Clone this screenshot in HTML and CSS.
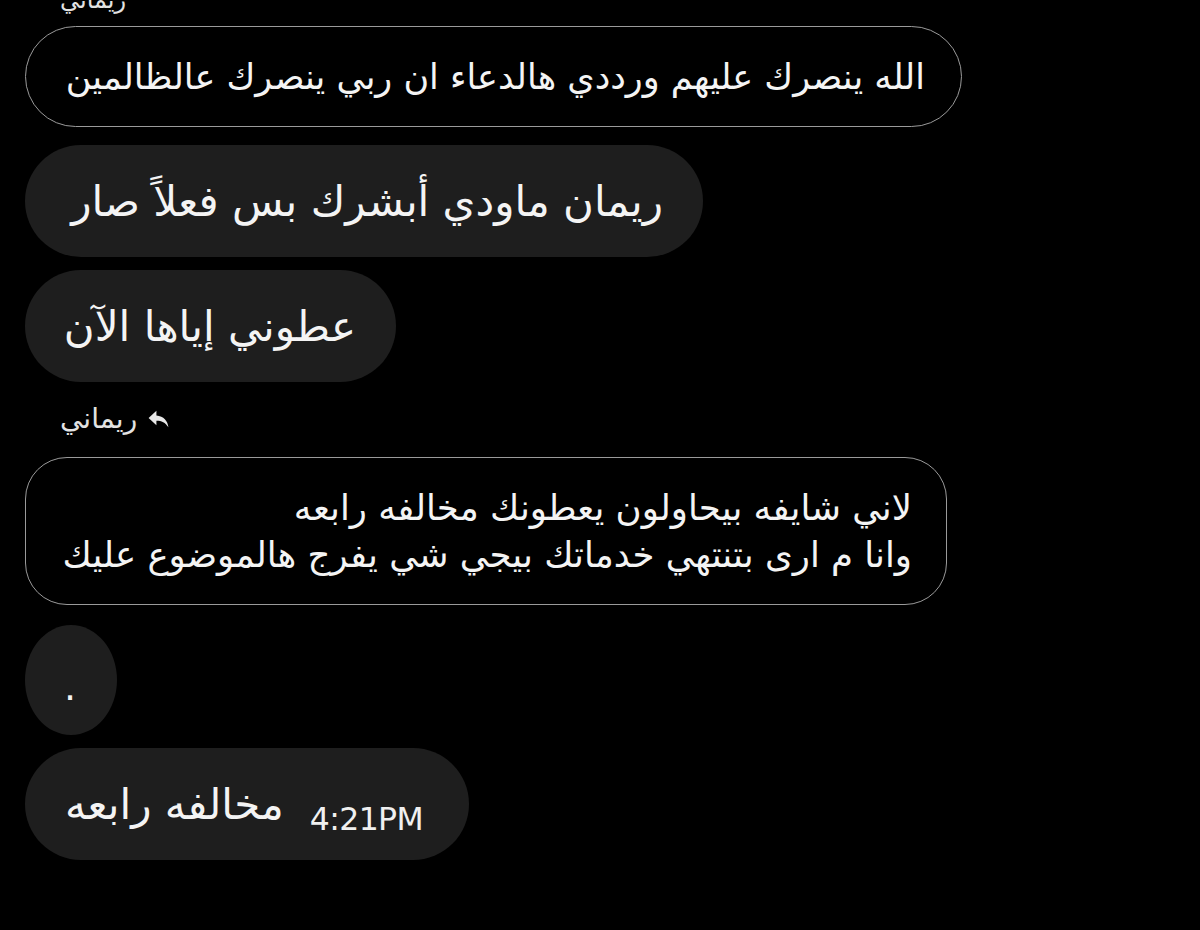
FILE: index.html
```html
<!DOCTYPE html>
<html lang="ar">
<head>
    <meta charset="UTF-8">
    <meta name="viewport" content="width=device-width, initial-scale=1.0">
    <title>محادثة</title>
    <link rel="stylesheet" href="styles.css">
</head>
<body>

<div class="chat">
    <!-- اسم المرسل (مقصوص أعلى الصورة) -->
    <div class="reply-label top-label" dir="rtl">ريماني</div>

    <div class="bubble outline wide" dir="rtl">الله ينصرك عليهم ورددي هالدعاء ان ربي ينصرك عالظالمين</div>

    <div class="bubble filled big b2" dir="rtl">ريمان ماودي أبشرك بس فعلاً صار</div>

    <div class="bubble filled big b3" dir="rtl">عطوني إياها الآن</div>

    <div class="reply-label" dir="rtl">
        <svg class="reply-icon" viewBox="0 0 24 24" width="25" height="25">
            <path d="M10 4.5 L2.5 11.5 L10 18.5 V14.2 C15 14.2 18.5 15.8 21.5 20.5 C20.8 14 17 9.6 10 9 Z" fill="#e8e8e8"/>
        </svg>
        <span>ريماني</span>
    </div>

    <div class="bubble outline multi" dir="rtl">
        <p>لاني شايفه بيحاولون يعطونك مخالفه رابعه<br>وانا م ارى بتنتهي خدماتك بيجي شي يفرج هالموضوع عليك</p>
    </div>

    <div class="bubble filled dot">.</div>

    <div class="bubble filled big last">
        <span dir="rtl">مخالفه رابعه</span>
        <span class="time">4:21PM</span>
    </div>
</div>

</body>
</html>
```

FILE: styles.css
```css
/* أساسيات */
* {
    margin: 0;
    padding: 0;
    box-sizing: border-box;
}

html, body {
    background-color: #000;
    color: #f2f2f2;
    font-family: 'DejaVu Sans', 'Noto Sans', sans-serif;
    height: 100%;
    overflow: hidden;
}

.chat {
    display: flex;
    flex-direction: column;
    align-items: flex-start;
    padding-left: 25px;
    margin-top: -18px;
}

/* الفقاعات */
.bubble {
    display: flex;
    align-items: center;
    color: #f4f4f4;
    white-space: nowrap;
}

.outline {
    border: 1.5px solid #9a9a9a;
    background-color: #000;
}

.filled {
    background-color: #1e1e1e;
}

.wide {
    width: 937px;
    height: 101px;
    border-radius: 51px;
    padding: 0 36px;
    font-size: 35px;
    margin-top: 8px;
}

.big {
    height: 112px;
    border-radius: 56px;
    padding: 0 40px;
    font-size: 42px;
}

.b2 {
    width: 678px;
    margin-top: 18px;
}

.b3 {
    width: 371px;
    margin-top: 13px;
}

.multi {
    width: 922px;
    height: 148px;
    border-radius: 42px;
    padding: 0 34px;
    font-size: 35.5px;
    line-height: 47px;
    margin-top: 22px;
}

.dot {
    width: 92px;
    height: 110px;
    border-radius: 50%;
    margin-top: 20px;
    justify-content: center;
    font-size: 38px;
    padding-top: 14px;
    padding-right: 2px;
}

.last {
    margin-top: 13px;
    width: 444px;
    gap: 26px;
    padding-right: 42px;
}

.time {
    font-size: 31.5px;
    letter-spacing: -0.6px;
    margin-top: 30px;
    color: #f0f0f0;
}

/* اسم الرد */
.reply-label {
    display: flex;
    align-items: center;
    gap: 9px;
    font-size: 28px;
    color: #e2e2e2;
    padding-left: 35px;
    margin-top: 20px;
}

.top-label {
    margin-top: 0;
    height: 36px;
    font-size: 24px;
}
```
